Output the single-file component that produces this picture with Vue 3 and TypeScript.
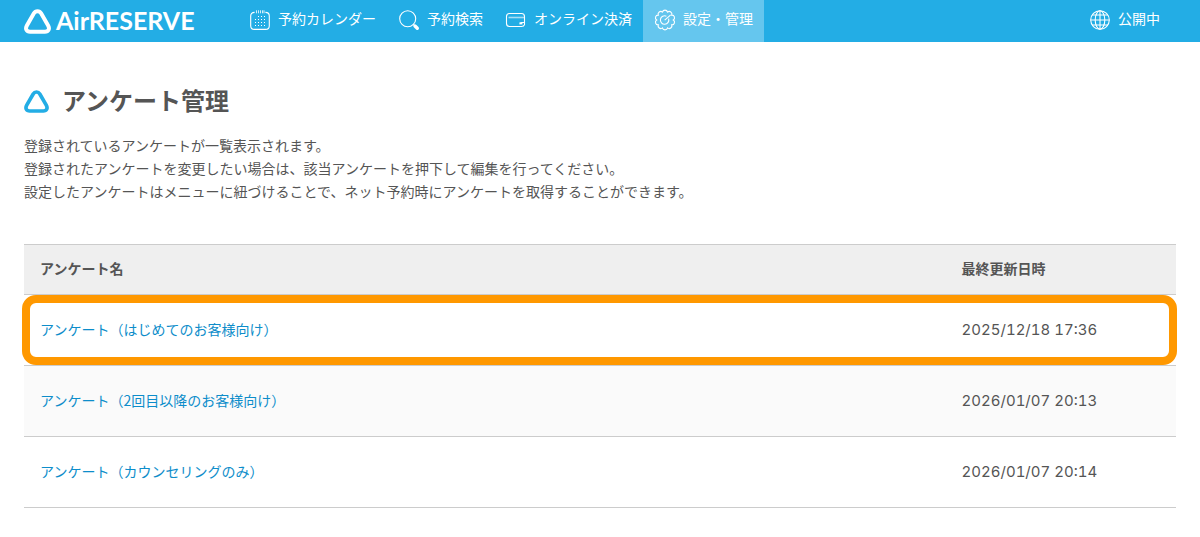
<script setup lang="ts">
interface NavItem {
  id: 'calendar' | 'search' | 'payment' | 'settings'
  label: string
}

interface Survey {
  name: string
  updatedAt: string
}

const activeNav: NavItem['id'] = 'settings'

const navItems: NavItem[] = [
  { id: 'calendar', label: '予約カレンダー' },
  { id: 'search', label: '予約検索' },
  { id: 'payment', label: 'オンライン決済' },
  { id: 'settings', label: '設定・管理' },
]

const description: string[] = [
  '登録されているアンケートが一覧表示されます。',
  '登録されたアンケートを変更したい場合は、該当アンケートを押下して編集を行ってください。',
  '設定したアンケートはメニューに紐づけることで、ネット予約時にアンケートを取得することができます。',
]

const surveys: Survey[] = [
  { name: 'アンケート（はじめてのお客様向け）', updatedAt: '2025/12/18 17:36' },
  { name: 'アンケート（2回目以降のお客様向け）', updatedAt: '2026/01/07 20:13' },
  { name: 'アンケート（カウンセリングのみ）', updatedAt: '2026/01/07 20:14' },
]

const highlightedRow = 0

// Scalloped outline of the gear: ten bumps around the centre of a 20px box.
const gearPath: string = (() => {
  const bumps = 10
  const point = (i: number): string => {
    const angle = ((i - 0.5) / bumps) * Math.PI * 2
    return `${(10 + 8.3 * Math.sin(angle)).toFixed(2)} ${(10 - 8.3 * Math.cos(angle)).toFixed(2)}`
  }
  let d = `M${point(0)}`
  for (let i = 1; i <= bumps; i++) d += `A2.65 2.65 0 0 1 ${point(i)}`
  return `${d}Z`
})()
</script>

<template>
  <div class="page">
    <header class="header">
      <a class="logo" href="#">
        <svg class="logo-mark" viewBox="0 0 27 25" aria-hidden="true">
          <path d="M13.5 2.2C15 2.2 16.3 3 17.1 4.3L24.1 16.4C26 19.8 24.5 22.8 20.9 22.8H6.1C2.5 22.8 1 19.8 2.9 16.4L9.9 4.3C10.7 3 12 2.2 13.5 2.2Z" />
        </svg>
        <span class="logo-text">AirRESERVE</span>
      </a>
      <nav class="nav">
        <a
          v-for="item in navItems"
          :key="item.id"
          href="#"
          class="nav-item"
          :class="{ active: item.id === activeNav }"
        >
          <svg class="icon" viewBox="0 0 20 20" aria-hidden="true">
            <template v-if="item.id === 'calendar'">
              <path d="M4.6 2.4C1.9 2.4.7 3.6.7 6v9.7c0 2.5 1.2 3.7 3.7 3.7h11.2c2.5 0 3.7-1.2 3.7-3.7V6c0-2.4-1.2-3.6-3.9-3.6" />
              <path class="faint" d="M6.5.3v3M8.5.3v3M10.5.3v3M12.5.3v3M14 .3v3" />
              <path class="dots" d="M8 6.5h8M5 9.5h11M5 12.5h11M5 15.5h11" />
            </template>
            <template v-else-if="item.id === 'search'">
              <circle cx="8.7" cy="8.7" r="8" />
              <path d="M14.4 14.4l1.6 1.6" />
              <path class="handle" d="M16 16l2.3 2.3" />
            </template>
            <template v-else-if="item.id === 'payment'">
              <path d="M18.5 13.2V6.5c0-2-.9-3-3-3h-12c-2.1 0-3 1-3 3v7c0 2 .9 3 3 3h12c1.6 0 2.6-.4 3-1.8v-2.2h-4" />
              <path class="stripe" d="M2.5 7.5h16" />
              <rect class="solid" x="13.4" y="12.4" width="3" height="2" />
            </template>
            <template v-else>
              <path :d="gearPath" />
              <path d="M13.6 8.7a4.2 4.2 0 1 1-2.2-2.5" />
              <path d="M9.7 10.2l6-5.4" />
            </template>
          </svg>
          <span class="nav-label">{{ item.label }}</span>
        </a>
      </nav>
      <a class="status" href="#">
        <svg class="icon" viewBox="0 0 20 20" aria-hidden="true">
          <circle cx="10" cy="10" r="9.3" />
          <ellipse cx="10" cy="10" rx="4.8" ry="9.3" />
          <path d="M10 .7v18.6M.7 10h18.6M2.4 5h15.2M2.4 15h15.2" />
        </svg>
        <span class="nav-label">公開中</span>
      </a>
    </header>

    <main class="main">
      <h1 class="title">
        <svg class="title-mark" viewBox="0 0 27 25" aria-hidden="true">
          <path d="M13.5 2.2C15 2.2 16.3 3 17.1 4.3L24.1 16.4C26 19.8 24.5 22.8 20.9 22.8H6.1C2.5 22.8 1 19.8 2.9 16.4L9.9 4.3C10.7 3 12 2.2 13.5 2.2Z" />
        </svg>
        <span class="title-text">アンケート管理</span>
      </h1>
      <p class="description">
        <span v-for="line in description" :key="line" class="line">{{ line }}</span>
      </p>

      <table class="surveys">
        <thead>
          <tr>
            <th class="name-column" scope="col">アンケート名</th>
            <th scope="col">最終更新日時</th>
          </tr>
        </thead>
        <tbody>
          <tr
            v-for="(survey, index) in surveys"
            :key="survey.name"
            :class="{ highlighted: index === highlightedRow }"
          >
            <td><a href="#">{{ survey.name }}</a></td>
            <td class="date">{{ survey.updatedAt }}</td>
          </tr>
        </tbody>
      </table>
    </main>
  </div>
</template>

<style>
body {
  margin: 0;
  background: #fff;
}
</style>

<style scoped>
.page {
  color: #555;
  font-family: "Noto Sans CJK JP", sans-serif;
  font-size: 14px;
}

a {
  text-decoration: none;
}

.header {
  display: flex;
  height: 42px;
  padding: 0 40px 0 24px;
  background: #23ade5;
  color: #fff;
}

.logo {
  display: flex;
  align-items: center;
  gap: 5px;
  width: 214px;
  color: #fff;
}

.logo-mark {
  width: 27px;
  height: 25px;
  fill: none;
  stroke: #fff;
  stroke-width: 4;
}

.logo-text {
  padding-bottom: 2px;
  font-family: Lato, sans-serif;
  font-size: 25px;
  font-weight: 700;
  line-height: 40px;
}

.nav {
  display: flex;
}

.nav-item,
.status {
  display: flex;
  align-items: center;
  gap: 8px;
  padding: 0 11px 3px 12px;
  color: #fff;
  white-space: nowrap;
}

.nav-item.active {
  background: #65c6ee;
}

.status {
  margin-left: auto;
  padding-right: 0;
}

.nav-label {
  padding-bottom: 4px;
  line-height: 20px;
}

.icon {
  flex: none;
  width: 20px;
  height: 20px;
  overflow: visible;
  fill: none;
  stroke: #fff;
  stroke-width: 1.1;
}

.icon .faint {
  stroke-width: 0.8;
}

.icon .dots {
  stroke-width: 1;
  stroke-dasharray: 1 2;
}

.icon .stripe {
  stroke-width: 1.6;
  stroke-opacity: 0.6;
}

.icon .handle {
  stroke-width: 3.4;
  stroke-linecap: round;
}

.icon .solid {
  fill: #fff;
  stroke: none;
}

.main {
  padding: 40px 24px 28px;
}

.title {
  display: flex;
  align-items: center;
  gap: 13px;
  margin: 0;
  font-size: 24px;
  font-weight: 700;
  line-height: 36px;
}

.title-mark {
  width: 25px;
  height: 23px;
  fill: none;
  stroke: #23ade5;
  stroke-width: 4;
}

.title-text {
  padding-bottom: 2px;
}

.description {
  margin: 14px 0 41px;
  line-height: 23px;
}

.line {
  display: block;
}

.surveys {
  width: 100%;
  border-spacing: 0;
  table-layout: fixed;
  text-align: left;
}

.name-column {
  width: 80%;
}

th,
td {
  box-sizing: border-box;
  padding: 0 16px 3px;
  border-bottom: 1px solid #ccc;
}

th {
  height: 51px;
  border-top: 1px solid #ccc;
  background: #efefef;
  font-weight: 700;
}

td {
  height: 71px;
}

tbody tr:nth-child(even) {
  background: #fafafa;
}

td a {
  color: #0d8dca;
}

.date {
  padding-bottom: 1px;
  font-family: Inter, sans-serif;
  font-size: 15px;
  font-variant-numeric: tabular-nums;
  white-space: nowrap;
}

.highlighted {
  position: relative;
}

.highlighted td:first-child::after {
  content: "";
  position: absolute;
  inset: 0 -1px 1px -2px;
  border: 8px solid #ff9800;
  border-radius: 14px;
  pointer-events: none;
}
</style>
